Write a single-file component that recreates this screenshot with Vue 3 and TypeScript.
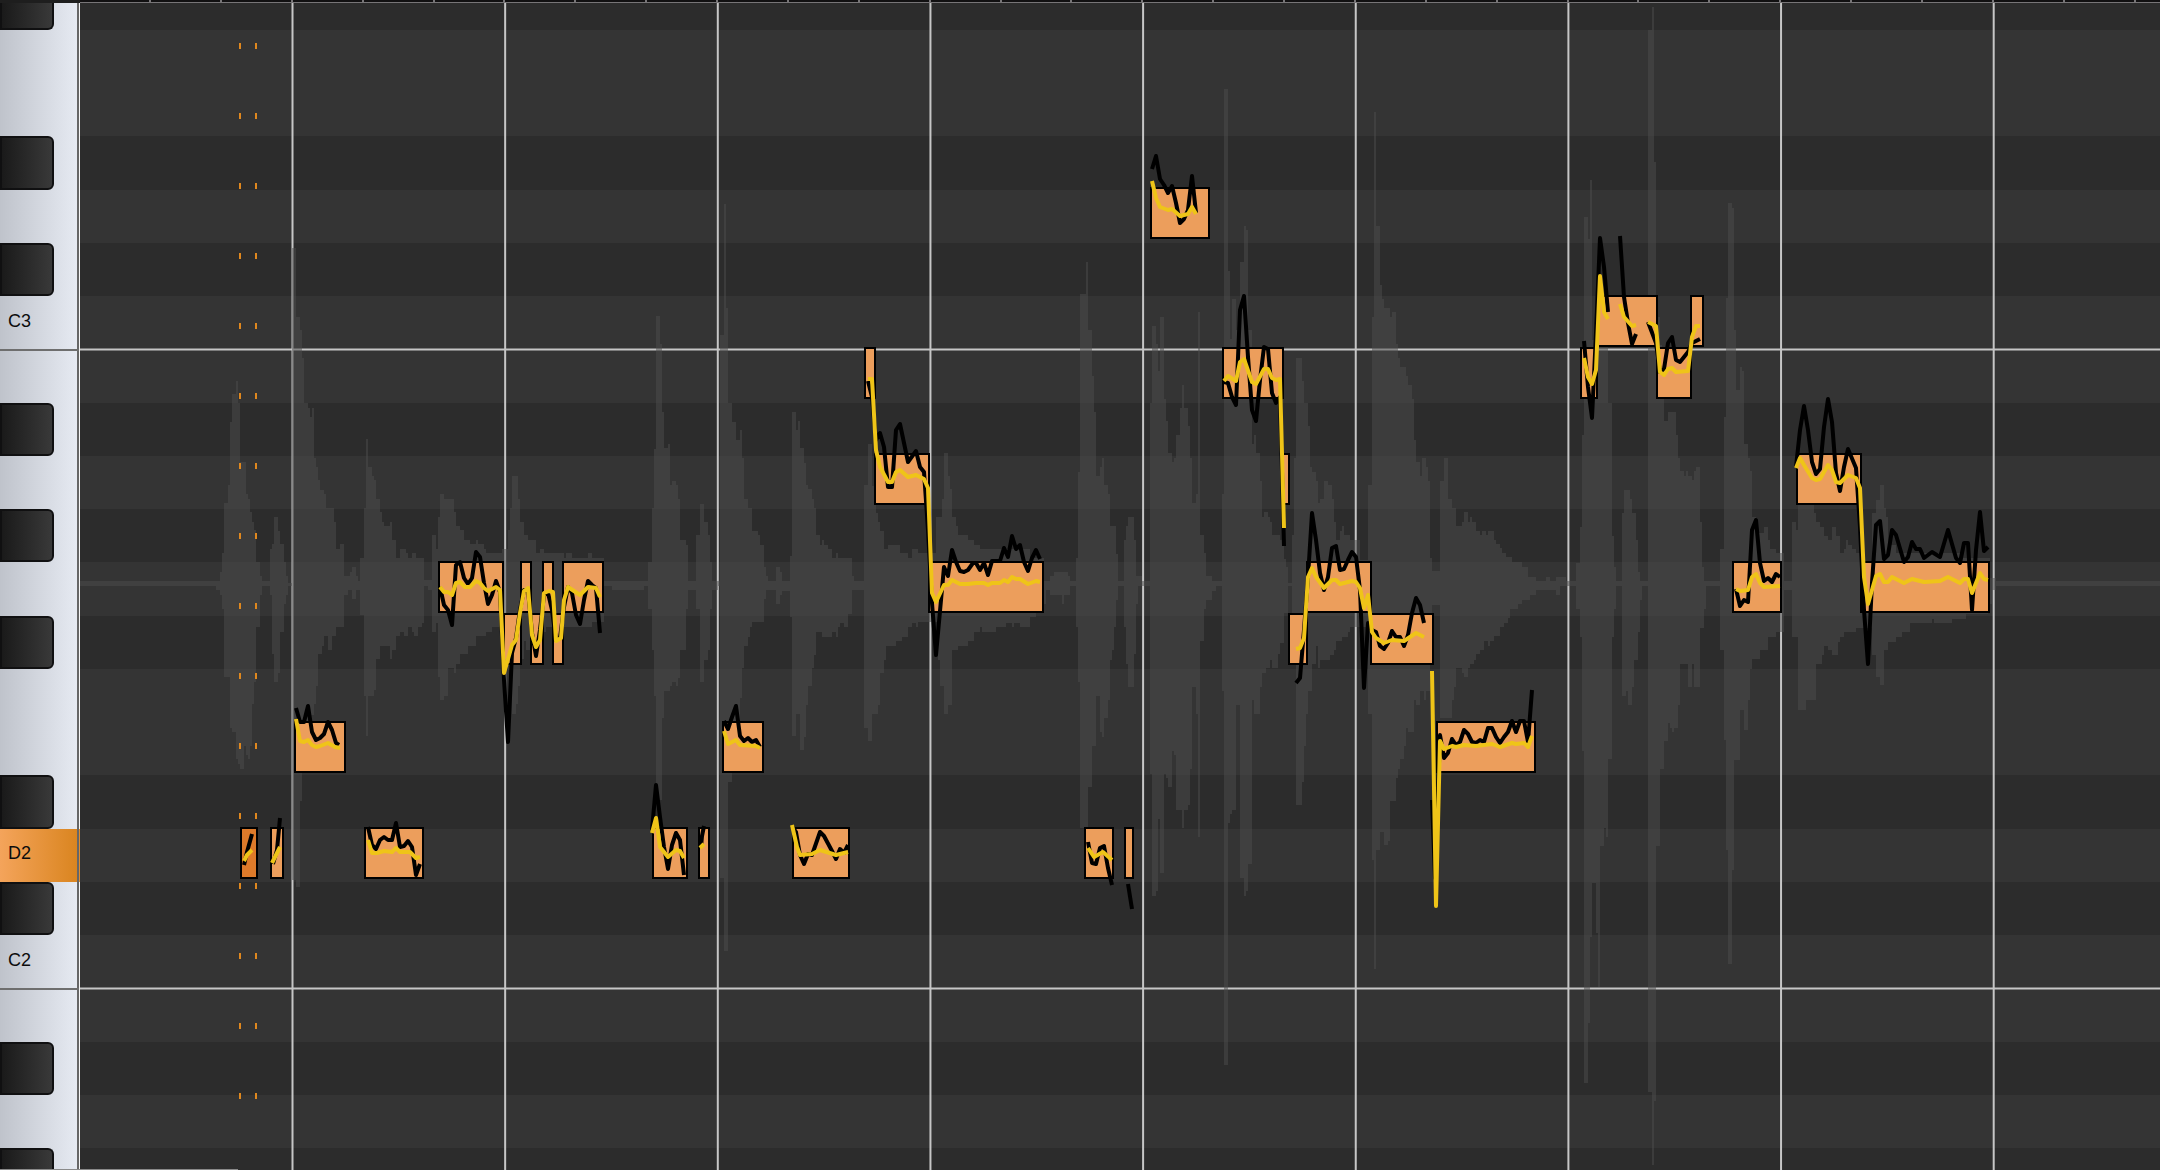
<script setup lang="ts">
interface Key {
  name: string
  black: boolean
  label: string
  active: boolean
  cut: '' | 'top' | 'bottom'
}

interface Note {
  x: number
  y: number
  w: number
  selected?: boolean
}

type Step = [number, number]

const NAMES = ['C', 'C#', 'D', 'D#', 'E', 'F', 'F#', 'G', 'G#', 'A', 'A#', 'B']
const TOP_PITCH = 42
const KEY_COUNT = 23

const keys: Key[] = Array.from({ length: KEY_COUNT }, (_, i) => {
  const pitch = TOP_PITCH - i
  const base = NAMES[pitch % 12]
  const name = base + Math.floor(pitch / 12)
  const active = name === 'D2'
  return {
    name,
    black: base.includes('#'),
    label: base === 'C' || active ? name : '',
    active,
    cut: i === 0 ? 'top' : i === KEY_COUNT - 1 ? 'bottom' : '',
  }
})

// Beat lines and ruler ticks
const beats = Array.from({ length: 9 }, (_, i) => 292.5 + i * 212.65)
const ticks = Array.from({ length: 29 }, (_, i) => Math.round(149 + i * 70.88))
const octaves = [349.5, 988.5]
const markers = Array.from({ length: 16 }, (_, i) => 43 + i * 70)

// Waveform envelope: each pair is the x where a level starts, and the level
const parse = (s: string): Step[] =>
  s.trim().split(/\s+/).map((p) => p.split(',').map(Number) as Step)

const upper = parse(`
80,581 220,572 222,553 224,503 228,485 230,422 232,394 236,381 238,403 240,462 246,494 248,499 250,512 252,522 254,530
256,562 260,576 262,581 270,549 272,544 274,517 278,531 280,544 284,562 286,576 288,583 292,248 296,317 300,330 302,358
304,403 308,408 310,417 312,408 314,458 316,467 318,480 320,490 324,494 326,508 334,522 336,549 340,544 344,576 350,572
352,567 356,576 358,581 360,558 364,508 366,439 368,467 372,476 374,480 376,499 380,512 382,522 384,526 390,522 392,540
396,558 400,549 406,553 408,558 412,553 416,558 424,580 432,535 436,549 438,517 440,494 444,499 454,512 456,526 460,530
464,540 470,544 476,540 478,544 484,549 486,553 502,549 508,530 510,508 512,476 518,499 520,522 524,535 528,540 536,553
540,549 544,553 564,558 566,553 572,558 588,553 592,558 604,581 648,562 652,508 654,449 656,316 660,344 662,412 664,448
668,444 670,485 672,481 676,485 678,499 680,540 686,545 688,581 696,535 700,504 704,522 708,535 710,562 712,581 720,335
724,204 726,308 728,403 732,422 736,440 740,430 742,458 744,499 748,508 752,531 758,535 760,545 764,567 766,576 768,581
776,567 780,572 782,581 790,556 792,412 796,430 798,421 800,448 804,463 806,485 808,489 812,499 814,508 816,535 820,545
822,540 824,545 828,549 832,558 836,553 838,558 852,576 854,581 864,485 868,444 872,486 876,513 878,522 880,531 884,549
888,545 900,553 908,558 912,549 918,553 936,517 942,499 944,453 948,476 950,489 952,517 956,526 958,535 968,540 974,545
980,549 1030,558 1044,581 1050,576 1054,572 1068,576 1070,581 1076,558 1078,472 1080,294 1086,262 1088,330 1092,376
1094,412 1096,476 1100,467 1102,458 1104,485 1108,494 1110,526 1116,554 1118,581 1124,540 1126,526 1128,517 1134,540
1136,576 1142,581 1150,403 1152,326 1156,344 1158,371 1160,317 1164,399 1166,421 1168,453 1172,462 1174,458 1176,435
1180,408 1182,385 1184,408 1188,426 1190,458 1192,503 1196,494 1198,312 1200,535 1204,553 1206,576 1212,581 1222,494
1224,89 1228,271 1230,339 1232,299 1236,330 1240,262 1244,226 1246,230 1248,330 1252,444 1254,435 1256,453 1260,481
1262,517 1264,512 1268,517 1270,522 1272,535 1280,540 1284,559 1286,567 1288,583 1292,535 1294,458 1296,358 1302,381
1304,403 1308,426 1310,467 1312,472 1316,481 1318,503 1320,499 1324,481 1328,485 1332,499 1334,522 1336,540 1340,531
1342,526 1344,535 1350,540 1360,560 1368,485 1372,317 1374,112 1376,226 1380,285 1382,299 1384,308 1390,317 1392,312
1396,344 1398,358 1400,367 1406,376 1408,385 1412,399 1414,440 1416,462 1420,476 1422,458 1426,467 1428,481 1430,558
1432,571 1440,481 1444,458 1448,499 1452,508 1456,526 1462,522 1464,512 1468,522 1470,517 1472,522 1476,531 1480,535
1482,531 1486,535 1488,531 1494,540 1496,544 1500,548 1502,553 1506,557 1512,562 1522,567 1528,577 1536,581 1546,577
1550,581 1556,577 1566,581 1576,563 1580,527 1582,435 1584,217 1588,239 1590,180 1592,340 1608,403 1612,536 1614,567
1616,581 1622,513 1624,490 1630,499 1632,513 1636,540 1638,572 1640,581 1648,30 1652,7 1654,162 1656,317 1660,345
1662,399 1664,421 1668,412 1676,435 1678,458 1680,471 1684,476 1686,471 1688,476 1692,480 1694,471 1696,467 1700,522
1702,567 1704,581 1720,549 1724,417 1726,298 1728,203 1732,208 1734,330 1736,390 1740,367 1742,371 1744,444 1748,458
1750,471 1752,517 1756,533 1764,527 1768,540 1770,549 1776,553 1784,581 1792,522 1796,530 1798,500 1814,513 1816,522
1820,527 1824,536 1828,540 1832,527 1836,536 1840,553 1844,549 1846,540 1848,545 1852,549 1856,553 1862,567 1872,513
1876,500 1880,485 1884,508 1886,517 1888,545 1896,553 1960,558 1990,578 1996,581 2160,581`)

const lower = parse(`
80,586 216,590 220,595 222,609 224,677 230,728 232,732 236,759 238,764 240,769 244,746 246,755 248,759 250,746 252,704
254,682 256,627 260,595 262,586 270,595 272,654 274,682 278,673 280,632 284,604 286,595 288,586 292,880 296,887 300,801
302,770 304,750 308,715 314,704 316,686 318,654 322,646 324,636 328,650 332,636 336,627 344,595 348,590 352,599 356,590
360,615 364,696 366,736 368,696 374,690 376,659 380,646 390,659 392,650 396,636 400,632 404,636 408,627 412,632 414,636
418,627 422,623 424,586 428,590 432,632 436,623 438,677 440,700 444,696 448,668 454,673 456,664 460,654 468,646 476,636
486,632 492,627 508,670 512,714 516,704 518,686 520,659 524,641 526,650 530,636 536,632 546,627 592,622 604,586 612,590
644,586 648,609 652,650 654,696 656,800 662,718 664,691 670,686 672,682 676,686 678,678 680,650 686,609 688,590 696,609
700,682 704,660 708,650 710,609 712,590 718,586 720,878 724,951 728,782 732,725 740,698 742,668 744,646 748,637 750,627
752,622 764,599 766,590 776,604 780,595 782,591 790,617 792,736 796,714 800,750 804,737 806,705 808,686 812,668 814,655
816,632 822,637 832,632 836,637 838,627 840,623 844,627 848,614 852,590 864,728 868,741 872,714 878,705 880,673 884,660
886,646 896,641 902,637 908,627 912,623 916,627 918,622 938,660 940,686 944,714 948,705 952,650 958,646 968,641 974,632
980,627 982,632 996,627 1006,623 1012,627 1014,623 1020,627 1030,617 1036,613 1044,604 1046,590 1050,595 1062,604
1064,595 1070,586 1076,627 1078,682 1080,828 1088,787 1092,746 1096,696 1100,732 1102,737 1104,718 1108,700 1110,660
1112,650 1114,627 1116,600 1118,586 1124,627 1126,664 1128,687 1134,654 1136,604 1138,586 1150,774 1152,896 1156,891
1158,819 1160,873 1164,774 1166,778 1168,787 1172,751 1174,755 1176,810 1182,828 1184,810 1188,805 1190,769 1192,687
1196,714 1198,837 1200,641 1204,609 1206,600 1212,591 1216,586 1222,691 1224,1065 1228,823 1230,814 1232,810 1236,705
1240,878 1244,896 1246,891 1248,864 1252,700 1254,714 1260,687 1262,673 1266,668 1270,660 1272,668 1278,654 1280,643
1284,613 1288,586 1292,640 1296,805 1302,782 1304,746 1306,714 1308,691 1312,664 1316,646 1318,668 1320,660 1330,655
1334,650 1336,641 1342,637 1348,632 1350,627 1368,714 1372,860 1374,969 1376,850 1380,832 1384,845 1388,841 1390,801
1392,801 1396,778 1398,769 1400,759 1404,746 1406,728 1408,732 1414,700 1416,705 1420,691 1424,700 1426,691 1430,655
1432,605 1440,718 1452,700 1454,687 1456,668 1462,673 1464,677 1468,668 1470,664 1474,660 1476,654 1480,650 1484,641
1488,646 1490,641 1494,636 1500,627 1504,623 1508,618 1510,609 1518,604 1522,600 1530,595 1536,590 1556,595 1560,586
1576,609 1580,637 1582,751 1584,1083 1588,1023 1590,937 1592,883 1596,933 1598,987 1600,846 1604,828 1606,837 1608,759
1612,637 1614,609 1616,586 1622,696 1626,691 1628,705 1632,687 1634,660 1638,632 1640,600 1642,586 1648,1092 1652,1165
1654,1101 1656,846 1660,769 1664,741 1668,723 1670,728 1672,732 1674,728 1678,705 1680,664 1688,687 1692,664 1694,687
1700,628 1704,609 1706,586 1720,650 1724,740 1726,850 1728,964 1732,870 1734,760 1740,710 1744,730 1748,700 1750,669
1752,659 1760,650 1768,637 1776,632 1784,590 1792,637 1798,710 1806,700 1816,664 1822,655 1824,646 1828,650 1832,655
1838,642 1840,637 1844,632 1856,628 1872,655 1876,677 1880,685 1884,650 1888,642 1896,637 1902,632 1910,623 1932,619
1934,623 1952,619 1966,614 1988,604 1992,590 1996,586 2160,586`)

function envelope(top: Step[], bottom: Step[]): string {
  let d = `M${top[0][0]} ${top[0][1]}`
  for (const [x, y] of top.slice(1)) d += `H${x}V${y}`
  const back = [...bottom].reverse()
  d += `V${back[0][1]}`
  for (let i = 0; i < back.length - 1; i++) d += `H${back[i][0]}V${back[i + 1][1]}`
  return d + `H${bottom[0][0]}Z`
}

const waveform = envelope(upper, lower)

const NOTE_HEIGHT = 52
const notes: Note[] = [
  { x: 240, y: 827, w: 18, selected: true },
  { x: 270, y: 827, w: 14 },
  { x: 294, y: 721, w: 52 },
  { x: 364, y: 827, w: 60 },
  { x: 438, y: 561, w: 66 },
  { x: 503, y: 613, w: 19 },
  { x: 520, y: 561, w: 12 },
  { x: 530, y: 613, w: 14 },
  { x: 542, y: 561, w: 12 },
  { x: 552, y: 613, w: 12 },
  { x: 562, y: 561, w: 42 },
  { x: 652, y: 827, w: 36 },
  { x: 698, y: 827, w: 12 },
  { x: 722, y: 721, w: 42 },
  { x: 792, y: 827, w: 58 },
  { x: 864, y: 347, w: 12 },
  { x: 874, y: 453, w: 56 },
  { x: 928, y: 561, w: 116 },
  { x: 1084, y: 827, w: 30 },
  { x: 1124, y: 827, w: 10 },
  { x: 1150, y: 187, w: 60 },
  { x: 1222, y: 347, w: 62 },
  { x: 1282, y: 453, w: 8 },
  { x: 1288, y: 613, w: 20 },
  { x: 1306, y: 561, w: 66 },
  { x: 1370, y: 613, w: 64 },
  { x: 1436, y: 721, w: 100 },
  { x: 1580, y: 347, w: 18 },
  { x: 1596, y: 295, w: 62 },
  { x: 1656, y: 347, w: 36 },
  { x: 1690, y: 295, w: 14 },
  { x: 1732, y: 561, w: 50 },
  { x: 1796, y: 453, w: 66 },
  { x: 1860, y: 561, w: 130 },
]

// Detected pitch
const rawPitch: string[] = [
  '244,865 247,852 252,834',
  '273,864 277,850 280,818',
  '296,708 300,722 304,722 308,706 312,732 316,740 320,738 324,734 328,722 332,730 336,743 339,745',
  '368,827 372,845 376,849 380,840 384,837 388,840 392,840 396,823 400,847 404,846 408,841 412,847 416,875 420,864',
  '440,587 444,605 448,610 452,625 456,565 460,562 464,578 468,584 472,578 476,552 480,557 484,583 488,604 492,595 496,581 500,592 504,680 508,742 512,653 516,638 520,610 524,590 528,590 532,633 536,656 540,630 544,595 548,593 552,610 556,640 560,638 564,607 568,587 572,593 576,615 580,624 584,600 588,581 592,585 596,588 600,633',
  '652,830 656,785 660,817 664,847 668,869 672,845 676,833 680,840 684,875',
  '701,847 702,836 704,826',
  '724,721 728,729 732,717 736,706 740,736 744,741 748,738 752,742 756,740 760,747',
  '792,826 796,832 800,855 804,864 808,854 812,855 820,832 824,836 832,851 836,859 840,849 844,853 848,845',
  '868,381 872,397 876,440 880,433 884,447 888,487 892,487 896,430 900,424 908,462 916,451 920,467 924,472 928,530 932,603 936,655 944,567 948,576 952,550 956,562 960,571 964,572 968,570 973,563 976,563 980,570 984,563 988,575 992,561 1000,561 1004,548 1008,557 1012,536 1016,549 1020,545 1024,562 1028,571 1032,558 1036,550 1040,559',
  '1088,842 1092,863 1096,864 1100,848 1104,846 1108,868 1112,885',
  '1128,884 1132,909',
  '1152,169 1156,156 1160,179 1164,185 1168,193 1172,186 1176,203 1180,223 1184,219 1188,210 1192,176 1196,213',
  '1224,382 1228,383 1232,397 1236,405 1240,310 1244,296 1248,357 1252,410 1256,421 1260,380 1264,347 1268,349 1272,393 1276,403 1280,397 1284,546',
  '1296,683 1300,678 1304,630 1308,577 1312,513 1316,540 1320,573 1324,590 1328,577 1332,548 1336,546 1340,570 1344,569 1348,560 1352,552 1356,557 1360,590 1364,688 1368,623 1372,630 1376,632 1380,646 1384,649 1388,643 1392,631 1396,637 1400,637 1404,646 1408,635 1412,613 1416,598 1420,605 1424,623',
  '1432,800 1435,878 1440,735 1444,758 1448,753 1452,739 1456,745 1460,742 1464,730 1468,734 1472,742 1476,743 1480,740 1484,742 1488,728 1492,728 1496,737 1500,743 1504,737 1508,732 1512,721 1516,732 1520,721 1524,721 1528,742 1532,690',
  '1584,341 1588,387 1592,418 1596,333 1600,238 1604,267 1608,312',
  '1620,236 1624,297 1628,323 1632,344 1636,334',
  '1648,322 1656,343 1660,372 1664,369 1668,343 1672,337 1676,360 1680,362 1688,352 1692,343 1700,339',
  '1736,589 1740,606 1744,600 1748,602 1752,530 1756,520 1760,563 1764,581 1768,578 1772,582 1776,574 1780,577',
  '1796,467 1800,430 1804,406 1808,430 1812,462 1816,474 1820,469 1824,427 1828,399 1832,422 1836,473 1840,491 1844,467 1848,449 1856,468 1860,527 1864,610 1868,664 1872,583 1876,525 1880,521 1884,559 1888,555 1892,530 1896,535 1904,562 1908,557 1912,542 1916,549 1920,549 1924,558 1932,552 1940,557 1948,530 1956,558 1960,563 1964,543 1968,543 1972,610 1976,550 1980,512 1984,551 1988,547',
]

// Corrected pitch
const tunedPitch: string[] = [
  '244,861 247,855 252,850',
  '272,863 276,855 280,847',
  '296,719 300,741 304,742 308,740 312,745 316,747 320,746 328,743 335,747 340,748',
  '368,840 372,853 377,853 384,851 392,852 396,848 400,852 410,852 416,858 420,857',
  '440,587 444,592 448,592 452,595 456,583 460,582 465,587 470,587 476,581 480,583 484,588 488,591 496,587 500,590 504,673 512,645 516,640 520,613 524,591 528,588 532,635 536,647 540,640 544,593 549,591 553,592 556,641 561,638 564,600 568,587 580,595 588,587 596,588 600,597',
  '652,833 656,818 660,847 668,857 676,850 680,851 684,858',
  '700,848 704,844',
  '724,731 728,744 736,740 740,745 756,746 760,748',
  '792,825 797,847 800,855 812,854 820,850 836,855 848,852',
  '868,379 872,379 876,450 880,467 888,482 892,482 896,472 900,470 908,477 916,475 924,479 928,488 932,593 936,602 944,585 948,585 952,580 960,584 968,584 976,583 984,583 988,585 992,583 1000,583 1004,580 1008,582 1012,577 1016,579 1020,579 1028,584 1036,581 1040,582',
  '1088,848 1094,857 1103,852 1112,860',
  '1152,181 1156,198 1160,207 1168,210 1172,209 1180,216 1188,214 1192,207 1196,214',
  '1224,381 1228,376 1236,381 1240,362 1244,359 1252,382 1256,384 1264,369 1268,369 1272,378 1276,380 1280,379 1284,528',
  '1296,649 1300,648 1304,638 1308,577 1312,568 1316,577 1324,588 1332,580 1336,580 1340,584 1352,581 1356,582 1360,588 1364,608 1368,595 1372,632 1376,638 1384,643 1392,640 1404,641 1416,633 1424,637',
  '1432,671 1436,906 1440,741 1444,749 1452,746 1456,747 1464,745 1476,746 1492,744 1500,747 1512,743 1516,744 1524,743 1528,747 1532,736',
  '1584,358 1588,377 1592,384 1596,370 1600,276 1604,312 1608,319',
  '1620,304 1624,317 1632,326 1636,325',
  '1648,322 1656,326 1660,372 1664,375 1668,369 1672,368 1676,372 1688,371 1692,337 1696,326 1700,326',
  '1736,589 1740,591 1748,590 1752,577 1756,574 1760,583 1764,587 1780,586',
  '1796,468 1800,458 1804,465 1812,478 1816,480 1820,479 1828,465 1832,470 1836,482 1840,483 1848,475 1856,478 1860,488 1864,577 1868,604 1876,576 1880,574 1884,582 1888,582 1892,577 1904,583 1912,579 1924,582 1940,581 1948,577 1960,583 1964,579 1968,579 1972,593 1980,573 1984,579 1988,580',
]
</script>

<template>
  <main class="editor">
    <header class="ruler">
      <div class="ruler-corner"></div>
      <svg class="ruler-ticks" viewBox="80 0 2080 3" preserveAspectRatio="none" aria-hidden="true">
        <rect class="ruler-base" x="80" y="2" width="2080" height="1" />
        <rect v-for="x in ticks" :key="x" class="tick" :x="x" y="0" width="2" height="2" />
      </svg>
    </header>

    <div class="body">
      <div class="keyboard lanes">
        <button
          v-for="key in keys"
          :key="key.name"
          type="button"
          class="key"
          :class="[
            key.black ? 'key-black' : 'key-white',
            key.cut && `key-cut-${key.cut}`,
            { 'key-active': key.active, 'key-c': !key.black && key.name.startsWith('C') },
          ]"
          :aria-label="key.name"
          :aria-pressed="key.active"
        >
          {{ key.label }}
        </button>
      </div>

      <section class="roll" aria-label="Pitch editor">
        <div class="lanes lanes-roll">
          <div v-for="key in keys" :key="key.name" class="lane" :class="{ 'lane-dark': key.black }"></div>
        </div>

        <svg class="plot" viewBox="80 3 2080 1167" preserveAspectRatio="none">
          <g class="grid">
            <line v-for="y in octaves" :key="y" x1="80" x2="2160" :y1="y" :y2="y" />
            <line v-for="x in beats" :key="x" :x1="x" :x2="x" y1="3" y2="1170" />
          </g>
          <path class="wave" :d="waveform" />
          <g class="marker">
            <template v-for="y in markers" :key="y">
              <rect x="239" :y="y" width="2" height="6" />
              <rect x="255" :y="y" width="2" height="6" />
            </template>
          </g>
          <rect
            v-for="note in notes"
            :key="`${note.x}-${note.y}`"
            class="note"
            :class="{ 'note-selected': note.selected }"
            :x="note.x + 1"
            :y="note.y + 1"
            :width="note.w - 2"
            :height="NOTE_HEIGHT - 2"
          />
          <polyline v-for="points in rawPitch" :key="points" class="curve curve-raw" :points="points" />
          <polyline v-for="points in tunedPitch" :key="points" class="curve curve-tuned" :points="points" />
        </svg>
      </section>
    </div>
    <div class="scroll-edge"></div>
  </main>
</template>

<style>
body {
  margin: 0;
  background: #2c2c2c;
}
</style>

<style scoped>
.editor {
  position: relative;
  display: flex;
  flex-direction: column;
  min-height: 100vh;
  overflow: hidden;
  font-family: "Liberation Sans", Arial, sans-serif;
}

.ruler {
  display: flex;
  height: 3px;
  background: #111011;
}

.ruler-corner {
  flex: none;
  width: 80px;
  background: #1e1e1e;
}

.ruler-ticks {
  flex: 1;
  min-width: 0;
  height: 3px;
}

.ruler-base,
.tick {
  fill: #777577;
}

.body {
  flex: 1;
  display: flex;
}

.lanes {
  display: grid;
  grid-template-rows: 27px repeat(21, minmax(24px, 1fr)) 22px;
}

.keyboard {
  position: relative;
  flex: none;
  box-sizing: border-box;
  width: 80px;
  background: linear-gradient(to right, #bfc3cb, #e6eaf2 77px, #666 77px, #666 79px, #f4f4f4 79px);
}

.key {
  position: relative;
  display: flex;
  align-items: center;
  min-height: 0;
  margin: 0;
  padding: 0 0 4px 8px;
  border: 0;
  background: none;
  color: #0c0c0c;
  font: inherit;
  font-size: 18px;
  line-height: 20px;
  text-align: left;
}

.key-black {
  box-sizing: border-box;
  width: 54px;
  border: 2px solid #101011;
  border-radius: 0 6px 6px 0;
  background: linear-gradient(to right, #1a1a1a, #393939);
}

.key-cut-top {
  border-top: 0;
  border-top-right-radius: 0;
}

.key-cut-bottom {
  border-bottom: 0;
  border-bottom-right-radius: 0;
}

.key-active {
  background: linear-gradient(to right, #f4a45b, #da8520 77px, #666 77px, #666 79px, #e08c2c 79px);
}

.key-c::after {
  content: "";
  position: absolute;
  z-index: 1;
  right: 1px;
  bottom: -2px;
  left: 0;
  height: 2px;
  background: #6e6e6e;
}

.roll {
  position: relative;
  flex: 1;
  display: flex;
  min-width: 0;
}

.lanes-roll {
  flex: 1;
}

.lane {
  background: #343434;
}

.lane-dark {
  background: #2c2c2c;
}

.plot {
  position: absolute;
  inset: 0;
  width: 100%;
  height: 100%;
}

.grid line {
  stroke: #c6c6c6;
  stroke-width: 2px;
}

.wave {
  fill: rgba(76, 76, 76, 0.5);
  shape-rendering: crispEdges;
}

.marker {
  fill: #e0881e;
}

.note {
  fill: #ec9e5c;
  stroke: #000;
  stroke-width: 2px;
}

.note-selected {
  fill: #dd7a2a;
}

.curve {
  fill: none;
  stroke-width: 4px;
  stroke-linejoin: round;
}

.curve-raw {
  stroke: #000;
}

.curve-tuned {
  stroke: #efc418;
}

.scroll-edge {
  position: absolute;
  bottom: 0;
  left: 0;
  width: 11%;
  height: 1px;
  background: #8a8a8a;
}
</style>
